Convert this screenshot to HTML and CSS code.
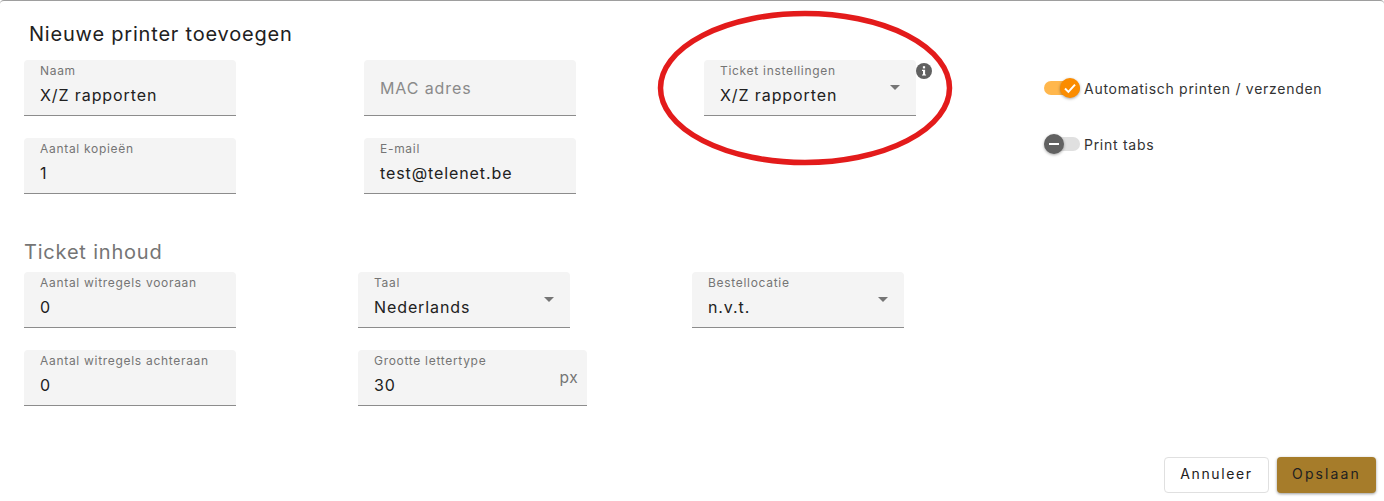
FILE: index.html
```html
<!DOCTYPE html>
<html lang="en">
<head>
    <meta charset="UTF-8">
    <title>Nieuwe printer toevoegen</title>
    <link rel="stylesheet" href="styles.css">
</head>
<body>
    <div class="dialog">
        <h2 class="title">Nieuwe printer toevoegen</h2>

        <div class="top">
            <div class="col">
                <div class="field"><label>Naam</label><span class="value">X/Z rapporten</span></div>
                <div class="field"><label>Aantal kopieën</label><span class="value">1</span></div>
            </div>
            <div class="col">
                <div class="field empty"><span class="placeholder">MAC adres</span></div>
                <div class="field"><label>E-mail</label><span class="value">test@telenet.be</span></div>
            </div>
            <div class="col">
                <div class="field select">
                    <label>Ticket instellingen</label><span class="value">X/Z rapporten</span>
                    <i class="arrow"></i>
                    <svg class="info" viewBox="0 0 16 16" width="16" height="16">
                        <circle cx="8" cy="8" r="8" fill="#616161"/>
                        <rect x="6.9" y="3.2" width="2.2" height="2.2" fill="#fff"/>
                        <path d="M6 6.8h3.1v4.6h1v1.2H6v-1.2h1V8H6z" fill="#fff"/>
                    </svg>
                </div>
            </div>
            <div class="toggles">
                <div class="toggle on">
                    <span class="track"></span>
                    <span class="knob">
                        <svg viewBox="0 0 20 20" width="20" height="20"><path d="M5 10.5l3.4 3.4L15 6.6" fill="none" stroke="#fff" stroke-width="2"/></svg>
                    </span>
                    <span class="toggle-text">Automatisch printen / verzenden</span>
                </div>
                <div class="toggle off">
                    <span class="track"></span>
                    <span class="knob">
                        <svg viewBox="0 0 20 20" width="20" height="20"><path d="M5 10h10" fill="none" stroke="#fff" stroke-width="2"/></svg>
                    </span>
                    <span class="toggle-text">Print tabs</span>
                </div>
            </div>
        </div>

        <h3 class="subtitle">Ticket inhoud</h3>

        <div class="bottom">
            <div class="col">
                <div class="field"><label>Aantal witregels vooraan</label><span class="value">0</span></div>
                <div class="field"><label>Aantal witregels achteraan</label><span class="value">0</span></div>
            </div>
            <div class="col">
                <div class="field select"><label>Taal</label><span class="value">Nederlands</span><i class="arrow"></i></div>
                <div class="field wide"><label>Grootte lettertype</label><span class="value">30</span><span class="suffix">px</span></div>
            </div>
            <div class="col">
                <div class="field select"><label>Bestellocatie</label><span class="value">n.v.t.</span><i class="arrow"></i></div>
            </div>
        </div>

        <div class="actions">
            <button class="btn">Annuleer</button>
            <button class="btn primary">Opslaan</button>
        </div>

        <svg class="circle" width="310" height="170" viewBox="0 0 310 170">
            <ellipse cx="155" cy="85" rx="144.5" ry="74.5" fill="none" stroke="#e31b1b" stroke-width="5.5"/>
        </svg>
    </div>
</body>
</html>
```

FILE: styles.css
```css
* {
    margin: 0;
    padding: 0;
    box-sizing: border-box;
}
html, body {
    height: 100%;
    overflow: hidden;
    background-color: #fff;
}
body {
    font-family: "Inter", "Liberation Sans", sans-serif;
    color: #212121;
}
.dialog {
    position: relative;
    height: 501px;
    padding: 22px 8px 0 24px;
    border-top: 1px solid #9e9e9e;
    border-radius: 4px 4px 0 0;
}
.title {
    height: 37px;
    padding-left: 5px;
    font-size: 20px;
    line-height: 22px;
    font-weight: 400;
    letter-spacing: 0.8px;
}
.top {
    display: flex;
}
.top .col {
    width: 340px;
}
.col {
    display: flex;
    flex-direction: column;
    gap: 22px;
}
.field {
    position: relative;
    width: 212px;
    height: 56px;
    padding: 3px 16px 0;
    background-color: #f4f4f4;
    border-bottom: 1px solid #8c8c8c;
    border-radius: 4px 4px 0 0;
}
.field.wide {
    width: 229px;
}
.field label {
    display: block;
    height: 15px;
    font-size: 12px;
    line-height: 15px;
    letter-spacing: 0.7px;
    color: #757575;
}
.value {
    display: block;
    margin-top: 7px;
    font-size: 16px;
    line-height: 20px;
    letter-spacing: 0.9px;
}
.placeholder {
    display: block;
    margin-top: 15px;
    font-size: 16px;
    line-height: 20px;
    letter-spacing: 0.9px;
    color: #8a8a8a;
}
.arrow {
    position: absolute;
    top: 25px;
    right: 16px;
    border-left: 5px solid transparent;
    border-right: 5px solid transparent;
    border-top: 5px solid #757575;
}
.info {
    position: absolute;
    top: 3px;
    right: -16px;
}
.suffix {
    position: absolute;
    top: 19px;
    right: 9px;
    font-size: 15.5px;
    line-height: 18px;
    letter-spacing: 0.4px;
    color: #757575;
}
.toggles {
    display: flex;
    flex-direction: column;
    gap: 36px;
    padding-top: 18px;
}
.toggle {
    position: relative;
    display: flex;
    align-items: center;
    height: 20px;
    padding-left: 40px;
}
.track {
    position: absolute;
    left: 0;
    top: 3px;
    width: 36px;
    height: 14px;
    border-radius: 7px;
    background-color: #e0e0e0;
}
.knob {
    position: absolute;
    top: 0;
    left: 0;
    width: 20px;
    height: 20px;
    border-radius: 50%;
    background-color: #616161;
    box-shadow: 0 1px 3px rgba(0, 0, 0, 0.35);
}
.knob svg {
    display: block;
}
.on .track {
    background-color: #ffb74d;
}
.on .knob {
    left: 16px;
    background-color: #fb8c00;
}
.toggle-text {
    font-size: 14px;
    letter-spacing: 0.72px;
    color: #333;
}
.subtitle {
    height: 33px;
    margin-top: 45px;
    padding-top: 1px;
    font-size: 20px;
    line-height: 24px;
    font-weight: 400;
    letter-spacing: 0.8px;
    color: #757575;
}
.bottom {
    display: flex;
}
.bottom .col {
    width: 334px;
}
.actions {
    position: absolute;
    right: 8px;
    bottom: 8px;
    display: flex;
    gap: 8px;
}
.btn {
    height: 36px;
    width: 105px;
    padding-bottom: 3px;
    font-family: inherit;
    font-size: 14px;
    letter-spacing: 1.6px;
    color: #212121;
    background-color: #fff;
    border: 1px solid #e0e0e0;
    border-radius: 4px;
}
.btn.primary {
    width: 99px;
    border: none;
    letter-spacing: 2.1px;
    background-color: #a67c2a;
    box-shadow: 0 1px 3px rgba(0, 0, 0, 0.4);
}
.circle {
    position: absolute;
    left: 650px;
    top: 2px;
}
```
